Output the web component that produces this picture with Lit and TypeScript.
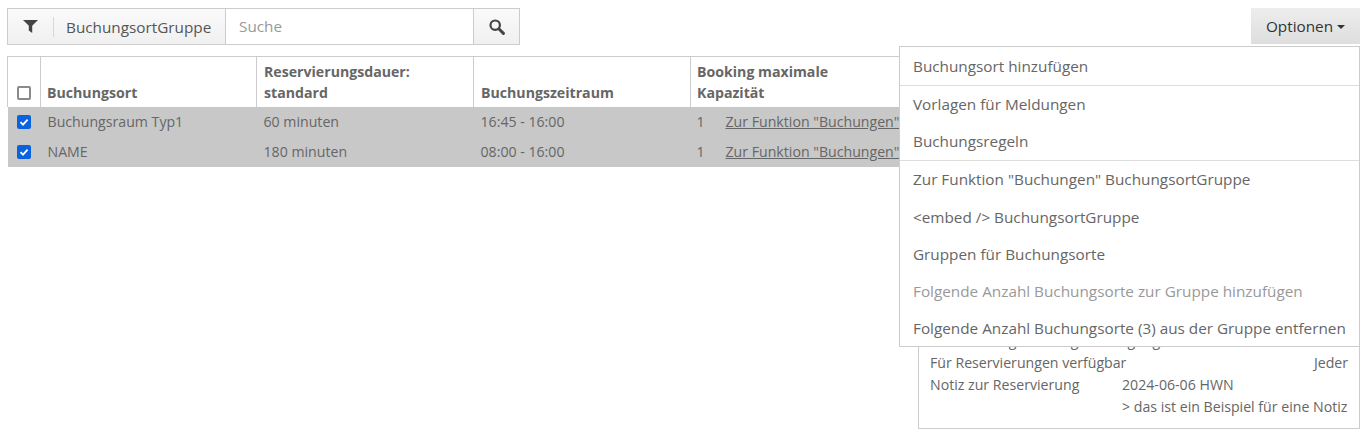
import { LitElement, html, css } from 'lit';
import { customElement } from 'lit/decorators.js';

const rows = [
  { name: 'Buchungsraum Typ1', dauer: '60 minuten', zeit: '16:45 - 16:00' },
  { name: 'NAME', dauer: '180 minuten', zeit: '08:00 - 16:00' },
];

@customElement('app-root')
export class AppRoot extends LitElement {
  static styles = css`
    :host {
      display: block;
      height: 433px;
      overflow: hidden;
      font-family: 'Open Sans', sans-serif;
      font-size: 14.15px;
      color: #666;
      background: #fff;
    }
    .page {
      position: relative;
      display: flex;
      flex-direction: column;
      padding: 8px 7px 0 7px;
    }
    .top {
      display: flex;
      justify-content: space-between;
      height: 37px;
    }
    .search {
      display: flex;
      width: 513px;
      height: 37px;
      box-sizing: border-box;
      border: 1px solid #ccc;
      background: #fff;
      font-size: 15.3px;
    }
    .filter {
      display: flex;
      align-items: center;
      width: 217px;
      flex: none;
      background: linear-gradient(#fafafa, #f0f0f0);
      border-right: 1px solid #ccc;
    }
    .funnel {
      display: flex;
      justify-content: center;
      width: 45px;
      flex: none;
    }
    .sep {
      width: 1px;
      height: 20px;
      background: #d8d8d8;
      flex: none;
    }
    .scope {
      padding-left: 12px;
      color: #555;
    }
    .query {
      flex: 1;
      padding-left: 13px;
      line-height: 35px;
      color: #999;
    }
    .go {
      display: flex;
      align-items: center;
      justify-content: center;
      width: 45px;
      flex: none;
      background: linear-gradient(#fafafa, #f0f0f0);
      border-left: 1px solid #ccc;
    }
    .options {
      width: 109px;
      height: 36px;
      display: flex;
      align-items: center;
      justify-content: center;
      gap: 4px;
      background: linear-gradient(#ededed, #dedede);
      color: #333;
      font-size: 15.3px;
    }
    .caret {
      width: 0;
      height: 0;
      margin-top: 2px;
      border-left: 4px solid transparent;
      border-right: 4px solid transparent;
      border-top: 4px solid #333;
    }
    table {
      margin-top: 11px;
      width: 1353px;
      box-sizing: border-box;
      border-collapse: collapse;
      table-layout: fixed;
    }
    th {
      height: 50px;
      box-sizing: border-box;
      padding: 0 7px 4px;
      border: 1px solid #ccc;
      border-bottom: none;
      text-align: left;
      vertical-align: bottom;
      line-height: 21px;
      font-weight: 700;
      color: #666;
    }
    th:nth-child(2),
    th:last-child {
      padding-left: 6px;
    }
    td {
      height: 30px;
      box-sizing: border-box;
      padding: 0 7px 1px;
      background: #c8c8c8;
      color: #666;
      white-space: nowrap;
    }
    td:last-child {
      padding-left: 6px;
    }
    th.check,
    td.check {
      padding: 0;
      text-align: center;
    }
    th.check {
      padding-bottom: 5px;
    }
    td.check {
      padding-bottom: 2px;
    }
    .box {
      display: inline-flex;
      align-items: center;
      justify-content: center;
      width: 14px;
      height: 14px;
      box-sizing: border-box;
      border-radius: 2px;
      vertical-align: middle;
    }
    .box.off {
      border: 2px solid #8a8a8a;
      background: #fff;
    }
    .box.on {
      background: #0b62de;
    }
    .count {
      display: inline-block;
      width: 29px;
    }
    a {
      color: #666;
      text-decoration: underline;
    }
    .menu {
      position: absolute;
      top: 46px;
      left: 899px;
      width: 461px;
      height: 301px;
      box-sizing: border-box;
      border: 1px solid #ccc;
      background: #fff;
      z-index: 2;
      font-size: 15.3px;
      overflow: hidden;
    }
    .item {
      height: 37.2px;
      line-height: 37.2px;
      padding-left: 13px;
      color: #666;
      white-space: nowrap;
    }
    .item.first {
      height: 38px;
      line-height: 39px;
    }
    .item.muted {
      color: #999;
    }
    .rule {
      height: 1px;
      background: #ddd;
    }
    .details {
      align-self: flex-end;
      margin-top: 4px;
      width: 442px;
      height: 258px;
      box-sizing: border-box;
      border: 1px solid #ccc;
      padding: 0 11px 10px;
      display: flex;
      flex-direction: column;
      justify-content: flex-end;
      line-height: 22px;
    }
    .line {
      display: flex;
      justify-content: space-between;
      white-space: nowrap;
    }
    .note {
      display: grid;
      grid-template-columns: 192px 1fr;
      white-space: nowrap;
    }
  `;

  private check() {
    return html`<span class="box on">
      <svg width="10" height="10" viewBox="0 0 10 10">
        <path d="M1.5 5.2 4 7.6 8.6 2.6" fill="none" stroke="#fff" stroke-width="1.8" />
      </svg>
    </span>`;
  }

  render() {
    return html`
      <div class="page">
        <div class="top">
          <div class="search">
            <div class="filter">
              <span class="funnel">
                <svg width="15" height="13" viewBox="0 0 15 13">
                  <path d="M0 0h15L9.2 5.8V13L5.8 10.6V5.8z" fill="#444" />
                </svg>
              </span>
              <span class="sep"></span>
              <span class="scope">BuchungsortGruppe</span>
            </div>
            <div class="query">Suche</div>
            <div class="go">
              <svg width="16" height="16" viewBox="0 0 16 16">
                <circle cx="6.2" cy="6.2" r="4.7" fill="none" stroke="#444" stroke-width="2.2" />
                <path d="M9.8 9.8 14.4 14.4" stroke="#444" stroke-width="3" stroke-linecap="round" />
              </svg>
            </div>
          </div>
          <div class="options">Optionen <span class="caret"></span></div>
        </div>

        <table>
          <colgroup>
            <col style="width:33px" />
            <col style="width:216px" />
            <col style="width:217px" />
            <col style="width:217px" />
            <col />
          </colgroup>
          <thead>
            <tr>
              <th class="check"><span class="box off"></span></th>
              <th>Buchungsort</th>
              <th>Reservierungsdauer:<br />standard</th>
              <th>Buchungszeitraum</th>
              <th>Booking maximale<br />Kapazität</th>
            </tr>
          </thead>
          <tbody>
            ${rows.map(
              (r) => html`<tr>
                <td class="check">${this.check()}</td>
                <td>${r.name}</td>
                <td>${r.dauer}</td>
                <td>${r.zeit}</td>
                <td><span class="count">1</span><a>Zur Funktion "Buchungen"</a></td>
              </tr>`
            )}
          </tbody>
        </table>

        <div class="details">
          <div class="line"><span>Reservierung Buchung Bestätigung</span></div>
          <div class="line"><span>Für Reservierungen verfügbar</span><span>Jeder</span></div>
          <div class="note"><span>Notiz zur Reservierung</span><span>2024-06-06 HWN</span></div>
          <div class="note"><span></span><span>&gt; das ist ein Beispiel für eine Notiz</span></div>
        </div>

        <div class="menu">
          <div class="item first">Buchungsort hinzufügen</div>
          <div class="rule"></div>
          <div class="item">Vorlagen für Meldungen</div>
          <div class="item">Buchungsregeln</div>
          <div class="rule"></div>
          <div class="item">Zur Funktion "Buchungen" BuchungsortGruppe</div>
          <div class="item">&lt;embed /&gt; BuchungsortGruppe</div>
          <div class="item">Gruppen für Buchungsorte</div>
          <div class="item muted">Folgende Anzahl Buchungsorte zur Gruppe hinzufügen</div>
          <div class="item">Folgende Anzahl Buchungsorte (3) aus der Gruppe entfernen</div>
        </div>
      </div>
    `;
  }
}
